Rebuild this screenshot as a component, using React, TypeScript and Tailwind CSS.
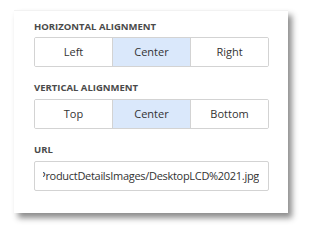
import React from "react"

const Label = ({ children }: { children: React.ReactNode }) => (
    <div className="text-[9.5px] leading-[14px] font-bold text-[#4a4a4a]">{children}</div>
)

const Segmented = ({ items, active }: { items: string[], active: number }) => (
    <div className="flex h-[30px] border border-[#d3d3d3] rounded-[2px] overflow-hidden">
        {items.map((it, i) => (
            <div
                key={it}
                className={`flex-1 flex items-center justify-center text-[11px] text-[#333] ${i > 0 ? 'border-l border-[#d3d3d3]' : ''} ${i === active ? 'bg-[#dae8fb]' : 'bg-white'}`}
            >
                {it}
            </div>
        ))}
    </div>
)

const App = () => {
    return (
        <div className="w-[312px] h-[241px] bg-white pt-[10px] pl-[14px]" style={{ fontFamily: '"Open Sans", "Noto Sans", sans-serif' }}>
            <div className="w-[274px] h-[203px] bg-white pl-[20px] pr-[19px] pt-[9px] shadow-[4px_5px_6px_rgba(0,0,0,0.45)] border-t border-[#f2f2f2]">
                <Label>HORIZONTAL ALIGNMENT</Label>
                <div className="mt-[3px]">
                    <Segmented items={['Left', 'Center', 'Right']} active={1} />
                </div>
                <div className="mt-[14px]">
                    <Label>VERTICAL ALIGNMENT</Label>
                </div>
                <div className="mt-[4px]">
                    <Segmented items={['Top', 'Center', 'Bottom']} active={1} />
                </div>
                <div className="mt-[14px]">
                    <Label>URL</Label>
                </div>
                <div className="mt-[4px] h-[30px] border border-[#d3d3d3] rounded-[2px] pl-[8px] pr-[9px] flex items-center">
                    <div className="flex-1 overflow-hidden flex justify-end whitespace-nowrap text-[11px] tracking-[-0.3px] text-[#333]">
                        https://demos.devexpress.com/ProductDetailsImages/DesktopLCD%2021.jpg
                    </div>
                </div>
            </div>
        </div>
    )
}

export default App
